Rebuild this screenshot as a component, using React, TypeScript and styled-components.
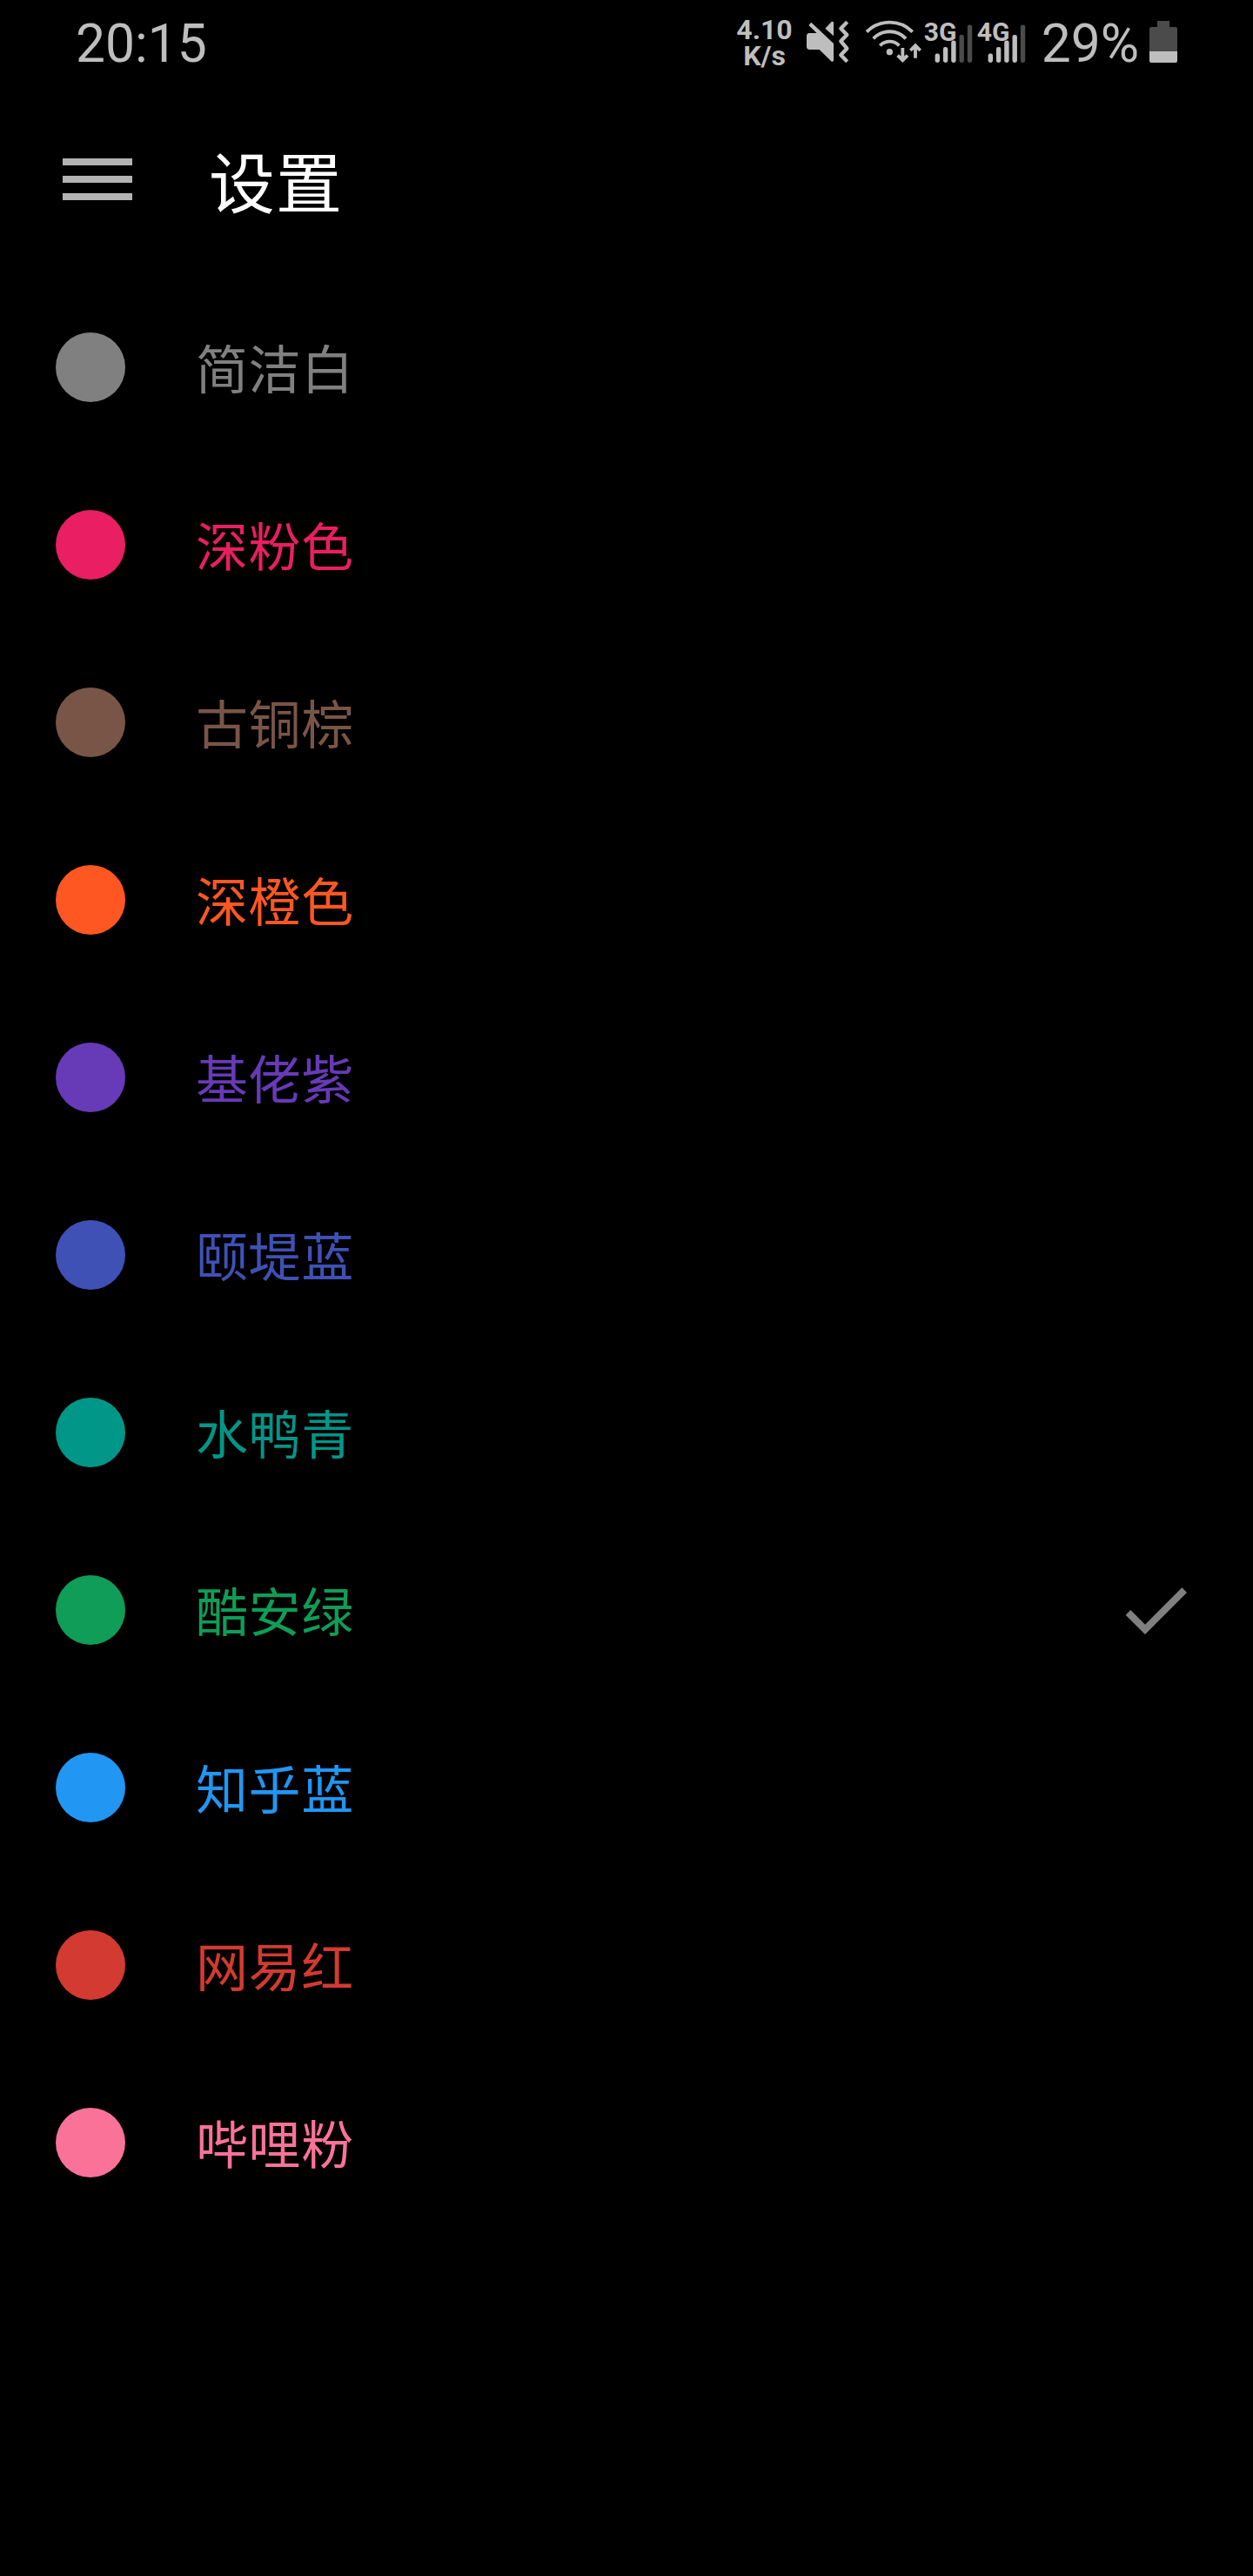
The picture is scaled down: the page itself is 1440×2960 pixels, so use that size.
import React from "react";
import styled, { createGlobalStyle } from "styled-components";

const GlobalStyle = createGlobalStyle`
  html, body { margin: 0; background: #000; }
`;

const STATUS = "#bebebe";
const DIM = "#4b4b4b";

const Screen = styled.div`
  width: 1440px;
  height: 2960px;
  display: flex;
  flex-direction: column;
  background: #000;
  font-family: Roboto, "Noto Sans CJK SC", sans-serif;
  overflow: hidden;
`;

const StatusBar = styled.header`
  height: 96px;
  box-sizing: border-box;
  padding: 0 87px;
  display: flex;
  justify-content: space-between;
  align-items: center;
  color: ${STATUS};
`;

const StatusText = styled.span`
  font-size: 60.5px;
  line-height: 96px;
  padding-top: 5px;
`;

const StatusIcons = styled.div`
  display: flex;
  align-items: center;
`;

const Speed = styled.div`
  white-space: pre-line;
  text-align: center;
  font-size: 32px;
  font-weight: 700;
  line-height: 30px;
  margin-right: 15px;
  padding-top: 2px;
`;

const Icon = styled.svg<{ $gap?: number }>`
  display: block;
  flex: none;
  overflow: visible;
  margin-right: ${(p) => p.$gap ?? 0}px;
`;

const SignalBox = styled.div<{ $gap: number }>`
  position: relative;
  margin-right: ${(p) => p.$gap}px;
`;

const SignalLabel = styled.span`
  position: absolute;
  left: 0;
  top: -2.5px;
  font-size: 30px;
  line-height: 30px;
  font-weight: 700;
`;

const Battery = styled.div`
  display: flex;
  align-items: center;
  gap: 12px;
`;

const AppBar = styled.nav`
  height: 224px;
  box-sizing: border-box;
  padding: 0 72px 4px;
  display: flex;
  align-items: center;
  gap: 88px;
`;

const Title = styled.h1`
  margin: 0;
  padding-top: 14px;
  font-size: 76px;
  line-height: 100px;
  letter-spacing: 1px;
  font-weight: 400;
  color: #fff;
`;

const ThemeList = styled.ul`
  margin: 0;
  padding: 0;
  list-style: none;
`;

const ThemeRow = styled.li`
  height: 204px;
  padding: 0 64px;
  display: flex;
  align-items: center;
`;

const Swatch = styled.span<{ $color: string }>`
  width: 80px;
  height: 80px;
  border-radius: 50%;
  background: ${(p) => p.$color};
`;

const ThemeName = styled.span<{ $color: string }>`
  flex: 1;
  margin-left: 81px;
  padding-top: 10px;
  font-size: 60px;
  line-height: 80px;
  letter-spacing: 0.6px;
  color: ${(p) => p.$color};
`;

const themes = [
  { name: "简洁白", color: "#808080" },
  { name: "深粉色", color: "#e91e63" },
  { name: "古铜棕", color: "#795548" },
  { name: "深橙色", color: "#ff5722" },
  { name: "基佬紫", color: "#673ab7" },
  { name: "颐堤蓝", color: "#3f51b5" },
  { name: "水鸭青", color: "#009688" },
  { name: "酷安绿", color: "#0f9d58", selected: true },
  { name: "知乎蓝", color: "#2196f3" },
  { name: "网易红", color: "#d33a31" },
  { name: "哔哩粉", color: "#fb7299" },
];

const barHeights = [10.4, 18, 25.4, 32, 43.4];

function Signal({ label, level, gap }: { label: string; level: number; gap: number }) {
  return (
    <SignalBox $gap={gap}>
      <Icon width="56" height="48" viewBox="0 0 56 48">
        {barHeights.map((h, i) => (
          <rect
            key={i}
            x={12.6 + i * 9.3}
            y={48 - h}
            width="5.4"
            height={h}
            rx="2.4"
            fill={i < level ? STATUS : DIM}
          />
        ))}
      </Icon>
      <SignalLabel>{label}</SignalLabel>
    </SignalBox>
  );
}

function MuteIcon() {
  return (
    <Icon $gap={18} width="50" height="48" viewBox="288 72 150 144" fill={STATUS}>
      <path d="M307 77L384 150V208Q383 214 377 212L335 171H299Q291 170 291 163V122Q292 115 299 114H326L298 87Z" />
      <path d="M355 98L377 75Q383 72 384 78V124Z" />
      <path d="M431 76L409 98L430 120L409 142L430 167L409 190L431 212" fill="none" stroke={STATUS} strokeWidth="13" strokeLinejoin="round" />
    </Icon>
  );
}

function WifiIcon() {
  return (
    <Icon $gap={2} width="66" height="48" viewBox="42 72 198 144" fill="none" stroke={STATUS} strokeWidth="11.5">
      <path d="M48 110A111 111 0 0 1 206 110" />
      <path d="M71 133A77 77 0 0 1 183 133" />
      <path d="M94 157A46 46 0 0 1 160 157" />
      <circle cx="127" cy="179" r="11" fill={STATUS} stroke="none" />
      <path d="M172 165V207M155 191L172 208L189 191" />
      <path d="M216 200V158M199 174L216 157L233 174" />
    </Icon>
  );
}

function BatteryIcon() {
  return (
    <Icon width="32" height="48" viewBox="0 0 32 48">
      <path d="M9 0H23V7H30Q32 7 32 9V35H0V9Q0 7 2 7H9Z" fill={DIM} />
      <path d="M0 35H32V46Q32 48 30 48H2Q0 48 0 46Z" fill={STATUS} />
    </Icon>
  );
}

export default function App() {
  return (
    <Screen>
      <GlobalStyle />
      <StatusBar>
        <StatusText>20:15</StatusText>
        <StatusIcons>
          <Speed>{"4.10\nK/s"}</Speed>
          <MuteIcon />
          <WifiIcon />
          <Signal label="3G" level={3} gap={5} />
          <Signal label="4G" level={4} gap={18} />
          <Battery>
            <StatusText>29%</StatusText>
            <BatteryIcon />
          </Battery>
        </StatusIcons>
      </StatusBar>
      <AppBar>
        <Icon width="80" height="48" viewBox="0 0 80 48" fill="#b3b3b3">
          <path d="M0 0H80V8H0ZM0 20H80V28H0ZM0 40H80V48H0Z" />
        </Icon>
        <Title>设置</Title>
      </AppBar>
      <ThemeList>
        {themes.map((t) => (
          <ThemeRow key={t.name}>
            <Swatch $color={t.color} />
            <ThemeName $color={t.color}>{t.name}</ThemeName>
            {t.selected && (
              <Icon width="96" height="96" viewBox="0 0 24 24" fill="#808080">
                <path d="M9 16.17L4.83 12l-1.42 1.41L9 19 21 7l-1.41-1.41z" />
              </Icon>
            )}
          </ThemeRow>
        ))}
      </ThemeList>
    </Screen>
  );
}
